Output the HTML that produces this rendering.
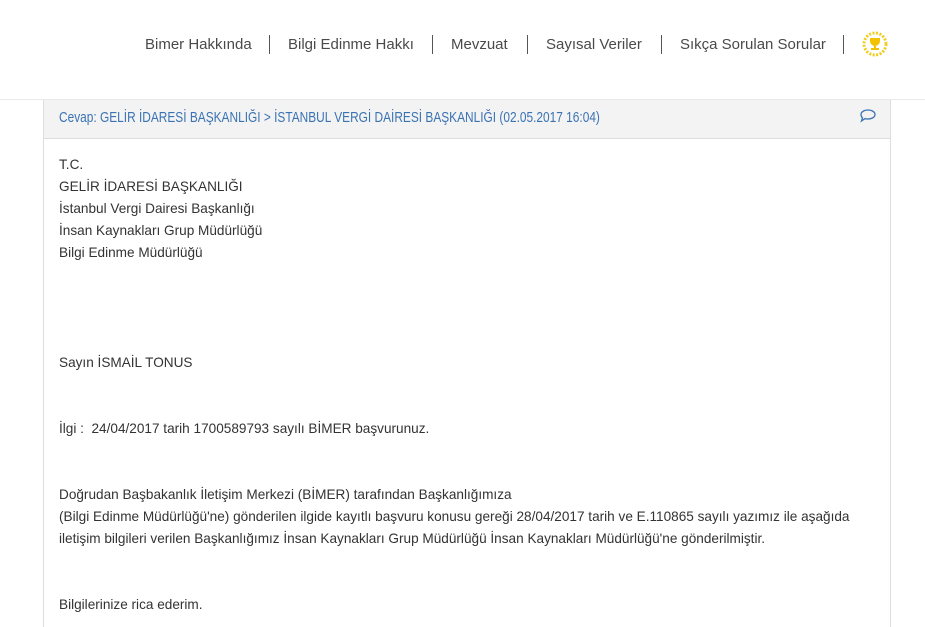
<!DOCTYPE html>
<html><head><meta charset="utf-8"><style>
html,body{margin:0;background:#fff;font-family:"Liberation Sans",sans-serif;color:#333;width:925px;height:627px;overflow:hidden}
body{position:relative}
.hdr{position:absolute;left:0;top:0;width:925px;height:99px;border-bottom:1px solid #eaeaea;background:#fff}
.nav{position:absolute;top:36px;left:145px;font-size:15px;color:#4a4a4a;white-space:nowrap}
.nav span{position:absolute;top:0}
.sep{position:absolute;top:35px;width:1px;height:19px;background:#555}
.panel{position:absolute;left:43px;top:100px;width:846px;height:527px;border-left:1px solid #ddd;border-right:1px solid #ddd}
.ph{height:38px;background:#f3f3f3;border-bottom:1px solid #ddd;color:#3a73b3;font-size:14.5px;line-height:36px;padding-left:15px;white-space:nowrap}
.ph span{display:inline-block;transform:scaleX(0.82);transform-origin:0 50%}
.body{position:absolute;left:59px;top:154px;font-size:13.6px;line-height:22px;color:#333;white-space:nowrap}
</style></head><body>
<div class="hdr">
<div class="nav">
<span style="left:0">Bimer Hakkında</span>
<span style="left:143px">Bilgi Edinme Hakkı</span>
<span style="left:306px">Mevzuat</span>
<span style="left:401px">Sayısal Veriler</span>
<span style="left:535px">Sıkça Sorulan Sorular</span>
</div>
<div class="sep" style="left:269px"></div>
<div class="sep" style="left:432px"></div>
<div class="sep" style="left:527px"></div>
<div class="sep" style="left:661px"></div>
<div class="sep" style="left:843px"></div>
<svg style="position:absolute;left:861px;top:31px" width="28" height="26" viewBox="0 0 28 26">
<circle cx="14" cy="13" r="11" fill="none" stroke="#f2cd1e" stroke-width="3" stroke-dasharray="2 1.5"/>
<path d="M9 7h10v3a5 5 0 0 1-10 0z M13 14h2v3h3v2h-8v-2h3z" fill="#f2c200"/>
</svg>
</div>
<div class="panel">
<div class="ph"><span>Cevap: GELİR İDARESİ BAŞKANLIĞI &gt; İSTANBUL VERGİ DAİRESİ BAŞKANLIĞI (02.05.2017 16:04)</span></div>
<svg style="position:absolute;left:815px;top:8px" width="18" height="16" viewBox="0 0 18 16"><path d="M9 2c4 0 7 2 7 4.5S13 11 9 11c-1 0-2 0-3-.4L2.5 13 3.5 10C2.5 9 2 7.8 2 6.5 2 4 5 2 9 2z" fill="none" stroke="#3a73b3" stroke-width="1.3"/></svg>
</div>
<div class="body">
T.C.<br>GELİR İDARESİ BAŞKANLIĞI<br>İstanbul Vergi Dairesi Başkanlığı<br>İnsan Kaynakları Grup Müdürlüğü<br>Bilgi Edinme Müdürlüğü<br><br><br><br><br>Sayın İSMAİL TONUS<br><br><br>İlgi :&nbsp; 24/04/2017 tarih 1700589793 sayılı BİMER başvurunuz.<br><br><br>Doğrudan Başbakanlık İletişim Merkezi (BİMER) tarafından Başkanlığımıza<br>(Bilgi Edinme Müdürlüğü'ne) gönderilen ilgide kayıtlı başvuru konusu gereği 28/04/2017 tarih ve E.110865 sayılı yazımız ile aşağıda<br>iletişim bilgileri verilen Başkanlığımız İnsan Kaynakları Grup Müdürlüğü İnsan Kaynakları Müdürlüğü'ne gönderilmiştir.<br><br><br>Bilgilerinize rica ederim.
</div>
</body></html>
